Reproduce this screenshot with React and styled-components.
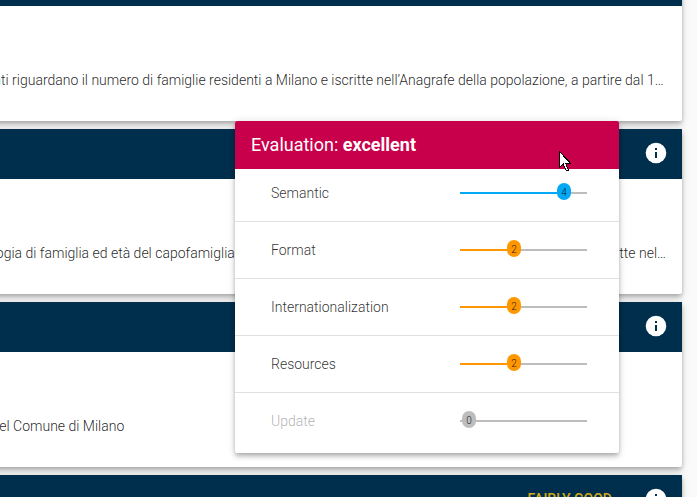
import React from "react";
import styled, { createGlobalStyle } from "styled-components";

const GlobalStyle = createGlobalStyle`
  html, body { margin: 0; padding: 0; background: #fafafa; overflow: hidden; }
  *, *::before, *::after { box-sizing: border-box; }
`;

const Viewport = styled.main`
  position: relative;
  width: 697px;
  height: 497px;
  overflow: hidden;
  background: #fafafa;
  font-family: Roboto, "Liberation Sans", sans-serif;
`;

const CardList = styled.div`
  display: flex;
  flex-direction: column;
  gap: 8px;
  width: 702px;
  margin: -44px 0 0 -20px;
`;

const Card = styled.article`
  flex: none;
  height: 165px;
  background: #fff;
  border-radius: 2px;
  box-shadow: 0 2px 4px -1px rgba(0, 0, 0, 0.2), 0 4px 5px 0 rgba(0, 0, 0, 0.14),
    0 1px 10px 0 rgba(0, 0, 0, 0.12);
`;

const CardHeader = styled.header`
  display: flex;
  align-items: center;
  justify-content: flex-end;
  gap: 32px;
  height: 50px;
  padding: 0 14px 2px 0;
  background: #002f4d;
`;

const Rating = styled.span`
  margin-top: -1px;
  color: #d1a91b;
  font-size: 14px;
  font-weight: 500;
  line-height: 20px;
`;

const CardText = styled.div`
  display: flex;
  justify-content: space-between;
  height: 20px;
  margin-top: 64px;
  padding-right: 16px;
  color: rgba(0, 0, 0, 0.87);
  font-size: 14px;
  font-weight: 300;
  line-height: 20px;
  white-space: nowrap;
`;

const Excerpt = styled.span`
  display: flex;
  justify-content: flex-end;
  width: ${({ $width }) => $width}px;
`;

const Popup = styled.section`
  position: absolute;
  left: 235px;
  top: 121px;
  width: 384px;
  height: 332px;
  border-radius: 2px;
  background: #fff;
  box-shadow: 0 2px 4px -1px rgba(0, 0, 0, 0.2), 0 4px 5px 0 rgba(0, 0, 0, 0.14),
    0 1px 10px 0 rgba(0, 0, 0, 0.12);
`;

const PopupTitle = styled.h2`
  height: 48px;
  margin: 0;
  padding-left: 16px;
  border-radius: 2px 2px 0 0;
  background: #c8004b;
  color: #fff;
  font-size: 18px;
  font-weight: 400;
  line-height: 48px;
  white-space: pre;
  strong { font-weight: 700; }
`;

const Metric = styled.div`
  display: flex;
  align-items: center;
  justify-content: space-between;
  height: ${({ $first, $last }) => ($first ? 53 : $last ? 56 : 57)}px;
  padding: ${({ $first }) => ($first ? "0 32px 4px 36px" : "0 32px 0 36px")};
  border-bottom: ${({ $last }) => ($last ? 0 : 1)}px solid #e0e0e0;
  color: ${({ $disabled }) => ($disabled ? "rgba(0,0,0,0.34)" : "rgba(0,0,0,0.82)")};
  font-size: 14px;
  font-weight: 300;
`;

const Slider = styled.div`
  position: relative;
  width: 127px;
  height: 2px;
  background: #bdbdbd;
`;

const Fill = styled.div`
  width: ${({ $at }) => $at}px;
  height: 2px;
  background: ${({ $color }) => $color};
`;

const Thumb = styled.span`
  position: absolute;
  left: ${({ $at }) => $at - 7}px;
  top: -9px;
  width: 14px;
  height: 17px;
  border-radius: 7px;
  background: ${({ $color }) => $color};
  color: rgba(0, 0, 0, 0.87);
  font-size: 10px;
  font-weight: 300;
  line-height: 19px;
  text-align: center;
`;

const InfoSvg = styled.svg`
  display: block;
  flex: none;
`;

const Pointer = styled.svg`
  position: absolute;
  left: 559px;
  top: 151px;
`;

const metrics = [
  { label: "Semantic", value: 4, color: "#03a9f4", at: 104 },
  { label: "Format", value: 2, color: "#ff9800", at: 54 },
  { label: "Internationalization", value: 2, color: "#ff9800", at: 54 },
  { label: "Resources", value: 2, color: "#ff9800", at: 54 },
  { label: "Update", value: 0, color: "#bdbdbd", at: 9, disabled: true },
];

function InfoIcon() {
  return (
    <InfoSvg width="24" height="24" viewBox="0 0 24 24">
      <circle cx="12" cy="12" r="10.3" fill="#fff" />
      <path d="M11 7h2v2h-2zM11 11h2v6h-2z" fill="#002f4d" />
    </InfoSvg>
  );
}

function DatasetCard({ rating, children }) {
  return (
    <Card>
      <CardHeader>
        {rating && <Rating>{rating}</Rating>}
        <InfoIcon />
      </CardHeader>
      {children}
    </Card>
  );
}

export default function App() {
  return (
    <>
      <GlobalStyle />
      <Viewport>
        <CardList>
          <DatasetCard>
            <CardText>
              <Excerpt $width={683.7}>
                ati riguardano il numero di famiglie residenti a Milano e iscritte nell’Anagrafe della
                popolazione, a partire dal 1…
              </Excerpt>
            </CardText>
          </DatasetCard>
          <DatasetCard>
            <CardText>
              <Excerpt $width={254.8}>ogia di famiglia ed età del capofamiglia</Excerpt>
              <span>tte nel…</span>
            </CardText>
          </DatasetCard>
          <DatasetCard>
            <CardText>
              <Excerpt $width={144.3}>el Comune di Milano</Excerpt>
            </CardText>
          </DatasetCard>
          <DatasetCard rating="FAIRLY GOOD" />
        </CardList>
        <Popup>
          <PopupTitle>
            Evaluation: <strong>excellent</strong>
          </PopupTitle>
          {metrics.map((m, i) => (
            <Metric key={m.label} $first={i === 0} $last={i === metrics.length - 1} $disabled={m.disabled}>
              <span>{m.label}</span>
              <Slider>
                {m.value > 0 && <Fill $color={m.color} $at={m.at} />}
                <Thumb $color={m.color} $at={m.at}>{m.value}</Thumb>
              </Slider>
            </Metric>
          ))}
        </Popup>
        <Pointer width="14" height="21" viewBox="0 0 14 21" shapeRendering="crispEdges">
          <path d="M.5.5v16l3.7-3.5 2.7 6h2.5l-2.6-6.2H12z" fill="#fff" stroke="#000" />
        </Pointer>
      </Viewport>
    </>
  );
}
